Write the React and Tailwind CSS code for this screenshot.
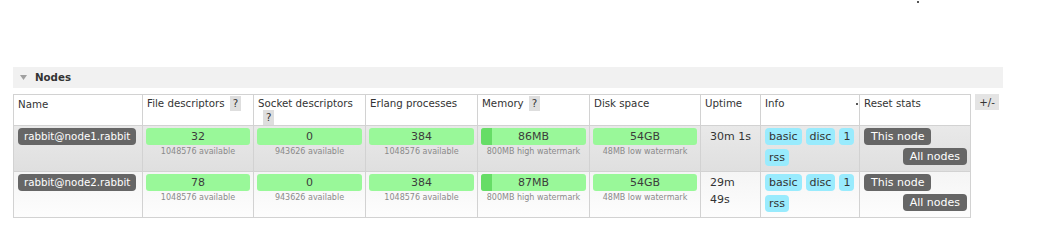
const nodes = [
  {
    name: 'rabbit@node1.rabbit',
    fd: '32',
    sockets: '0',
    procs: '384',
    mem: '86MB',
    disk: '54GB',
    uptime: '30m 1s',
    rowClass: 'bg-gradient-to-b from-[#e9e9e9] to-[#dfdfdf]',
  },
  {
    name: 'rabbit@node2.rabbit',
    fd: '78',
    sockets: '0',
    procs: '384',
    mem: '87MB',
    disk: '54GB',
    uptime: '29m 49s',
    rowClass: 'bg-gradient-to-b from-[#f5f5f5] to-[#fdfdfd]',
  },
];

function Help() {
  return (
    <span className="inline-block h-[15px] px-[3px] ml-[5px] bg-[#dedede] leading-[15px] align-top">?</span>
  );
}

function Bar({ value, sub, memory }) {
  return (
    <div className="flex flex-col items-center">
      <div className="relative w-full h-[17px] rounded-[3px] bg-[#99f899] text-[#3c3c3c] text-center leading-[17px] text-[11px] overflow-hidden">
        {memory && (
          <div className="absolute left-0 top-0 h-full w-[11px] bg-[#66dd66]" />
        )}
        <span className="relative">{value}</span>
      </div>
      <div className="text-[8px] leading-[11px] mt-[1px] text-[#8a8a8a]">{sub}</div>
    </div>
  );
}

function Pill({ children, className = '' }) {
  return (
    <span className={`inline-block h-[17px] leading-[17px] rounded-[4px] ${className}`}>{children}</span>
  );
}

export default function App() {
  const th = 'border border-[#d2d2d2] bg-white text-left font-normal align-top pt-[1px] px-[4px] leading-[14px]';
  const td = 'border border-[#d2d2d2] align-top pt-[2px] px-[3px] pb-0';

  return (
    <div
      className="w-[1055px] h-[242px] bg-white text-[#333] text-[10.25px] overflow-hidden"
      style={{ fontFamily: '"DejaVu Sans", Verdana, sans-serif' }}
    >
      <div className="h-[3px] pt-[1px] pl-[917px]">
        <div className="w-[2px] h-[2px] bg-[#555]" />
      </div>

      <div className="mt-[64px] ml-[13px] w-[990px] h-[21px] bg-[#f1f1f1] flex items-center">
        <svg width="7" height="5" viewBox="0 0 7 5" className="ml-[7px]">
          <polygon points="0,0 7,0 3.5,5" fill="#a0a0a0" />
        </svg>
        <span className="ml-[8px] font-bold text-[#333]">Nodes</span>
      </div>

      <div className="mt-[6px] ml-[13px] flex items-start">
        <table className="table-fixed border-collapse w-[957px]">
          <colgroup>
            <col className="w-[129px]" />
            <col className="w-[111px]" />
            <col className="w-[112px]" />
            <col className="w-[112px]" />
            <col className="w-[112px]" />
            <col className="w-[111px]" />
            <col className="w-[60px]" />
            <col className="w-[99px]" />
            <col className="w-[111px]" />
          </colgroup>
          <thead>
            <tr className="h-[30px]">
              <th className={th}>
                <span className="leading-[16px]">Name</span>
              </th>
              <th className={th}>
                File descriptors<Help />
              </th>
              <th className={th}>
                Socket descriptors<Help />
              </th>
              <th className={th}>Erlang processes</th>
              <th className={th}>
                Memory<Help />
              </th>
              <th className={th}>Disk space</th>
              <th className={th}>Uptime</th>
              <th className={th}>
                <div className="flex justify-between items-start">
                  <span>Info</span>
                  <span className="w-[2px] h-[2px] mt-[7px] mr-[-3px] bg-[#555]" />
                </div>
              </th>
              <th className={th}>Reset stats</th>
            </tr>
          </thead>
          <tbody>
            {nodes.map((n) => (
              <tr key={n.name} className={`h-[46px] ${n.rowClass}`}>
                <td className={`${td} pl-[4px]`}>
                  <Pill className="px-[6px] bg-[#666] text-white">{n.name}</Pill>
                </td>
                <td className={td}>
                  <Bar value={n.fd} sub="1048576 available" />
                </td>
                <td className={td}>
                  <Bar value={n.sockets} sub="943626 available" />
                </td>
                <td className={td}>
                  <Bar value={n.procs} sub="1048576 available" />
                </td>
                <td className={td}>
                  <Bar value={n.mem} sub="800MB high watermark" memory />
                </td>
                <td className={td}>
                  <Bar value={n.disk} sub="48MB low watermark" />
                </td>
                <td className={`${td} pl-[9px] pr-[8px] leading-[17px] text-[11px]`}>{n.uptime}</td>
                <td className={`${td} pl-[4px]`}>
                  <div className="flex flex-wrap gap-x-[4px] gap-y-[4px] text-[11px]">
                    <Pill className="px-[4px] bg-[#99ebfd]">basic</Pill>
                    <Pill className="px-[4px] bg-[#99ebfd]">disc</Pill>
                    <Pill className="px-[4px] bg-[#99ebfd]">1</Pill>
                    <Pill className="px-[4px] bg-[#99ebfd]">rss</Pill>
                  </div>
                </td>
                <td className={`${td} pl-[4px] pr-[3px]`}>
                  <div className="flex flex-col gap-[3px] text-[11px]">
                    <Pill className="self-start px-[7px] bg-[#666] text-white">This node</Pill>
                    <Pill className="self-end px-[7px] bg-[#666] text-white">All nodes</Pill>
                  </div>
                </td>
              </tr>
            ))}
          </tbody>
        </table>
        <div className="ml-[4px] w-[24px] h-[16px] bg-[#e4e4e4] text-center leading-[16px]">+/-</div>
      </div>
    </div>
  );
}
